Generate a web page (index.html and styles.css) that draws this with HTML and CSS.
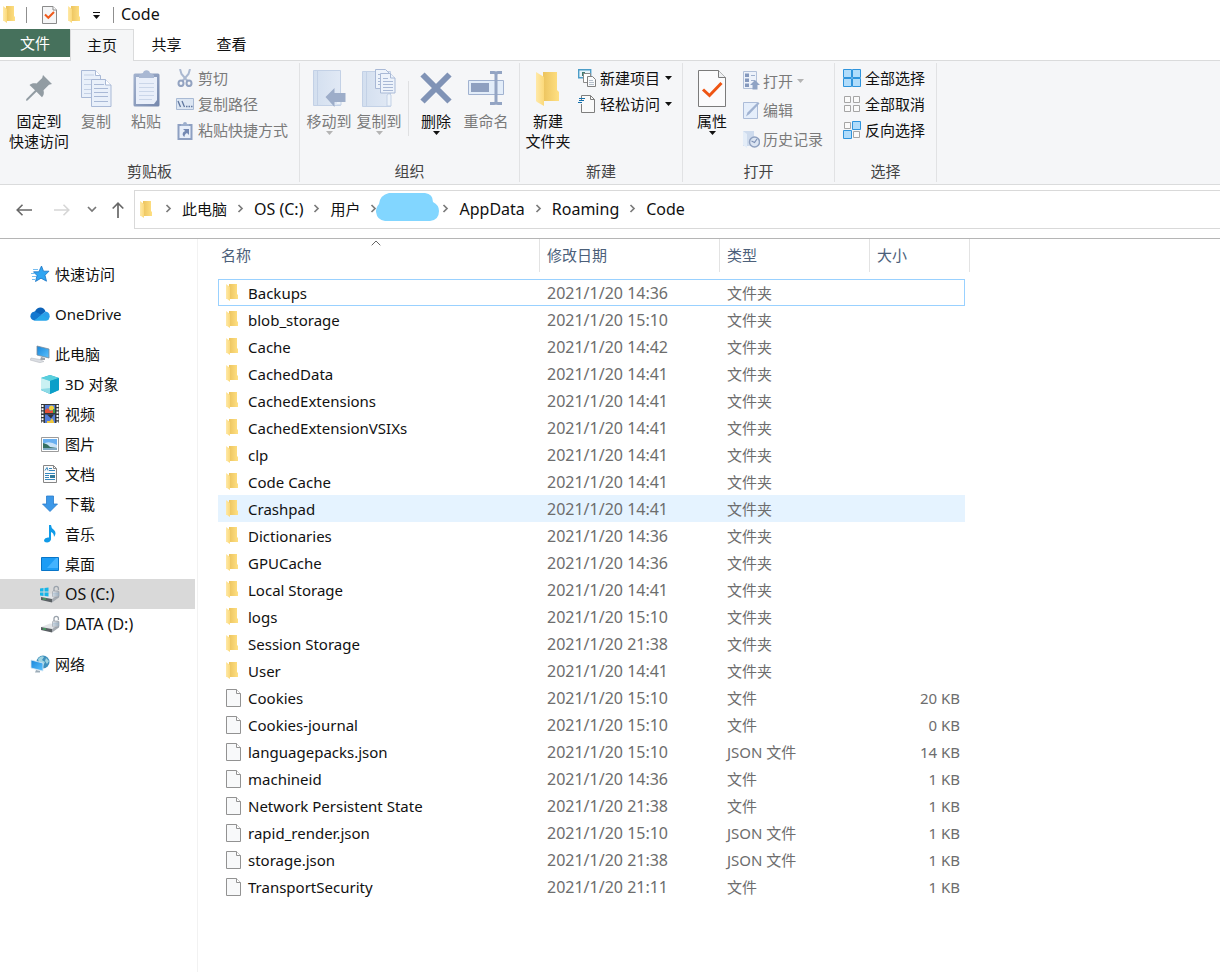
FILE: index.html
```html
<!DOCTYPE html>
<html lang="zh-CN">
<head>
<meta charset="utf-8">
<meta name="viewport" content="width=device-width, initial-scale=1">
<title>Code</title>
<link rel="stylesheet" href="styles.css">
</head>
<body>
<svg class="defs" width="0" height="0" aria-hidden="true">
  <defs>
    <linearGradient id="g-front" x1="0" x2="1"><stop offset="0" stop-color="#ffe9a8"/><stop offset="1" stop-color="#fbd97a"/></linearGradient>
    <linearGradient id="g-back" x1="0" x2="1"><stop offset="0" stop-color="#ecc45f"/><stop offset="1" stop-color="#ffe083"/></linearGradient>
    <linearGradient id="g-sky" x1="0" y1="0" x2="1" y2="1"><stop offset="0" stop-color="#1784d8"/><stop offset="1" stop-color="#5cc3ff"/></linearGradient>
    <linearGradient id="g-metal" x1="0" x2="1"><stop offset="0" stop-color="#f0f0f0"/><stop offset="1" stop-color="#a9adb3"/></linearGradient>
    <linearGradient id="g-slate" x1="0" y1="0" x2="1" y2="1"><stop offset="0" stop-color="#a3b3cf"/><stop offset="1" stop-color="#7688ad"/></linearGradient>
    <linearGradient id="g-book" x1="0" x2="1"><stop offset="0" stop-color="#d3dfef"/><stop offset="1" stop-color="#e1e9f5"/></linearGradient>
    <symbol id="folder" viewBox="0 0 12 17">
      <path d="M3 0h8v10l1 1v4H3z" fill="url(#g-back)"/>
      <path d="M0 0l4 3v14l-3-2H0z" fill="url(#g-front)"/>
    </symbol>
    <symbol id="file" viewBox="0 0 15 18">
      <path d="M.5.5h10l4 4v13H.5z" fill="#f8f9fa" stroke="#929292"/>
      <path d="M10.500.5v4h4" fill="#fff" stroke="#929292"/>
    </symbol>
    <symbol id="chev" viewBox="0 0 7 9"><path d="M1.500 1l3.500 3.500-3.500 3.500" fill="none" stroke="#7b7b7b" stroke-width="1.700"/></symbol>
    <symbol id="caret" viewBox="0 0 7 4"><path d="M0 0h7L3.500 4z" fill="currentColor"/></symbol>
    <symbol id="drive" viewBox="0 0 20 18">
      <path d="M1 12l9-3.500 9 1-7 4.500z" fill="#e3e5e8"/>
      <path d="M1 12l11 2v3.500L1 15z" fill="#5a6064"/>
      <path d="M12 14l7-4.500v3l-7 5z" fill="#a6abb1"/>
      <rect x="3" y="13.500" width="3" height="1" fill="#37c65a"/>
      <path d="M14 7V3.500a2.200 2.200 0 0 1 4.400 0V5" fill="none" stroke="#9aa2ab" stroke-width="1.300"/>
      <rect x="12.500" y="6" width="6.500" height="6" rx="1" fill="url(#g-metal)" stroke="#8c96a3" stroke-width=".6"/>
      <path d="M13 8.200h6M13 10h6" stroke="#8fb1cf" stroke-width=".7"/>
    </symbol>
  </defs>
</svg>

<header class="titlebar">
  <svg class="title-folder" width="12" height="17"><use href="#folder"/></svg>
  <span class="title-sep title-sep-first"></span>
  <button class="quick quick-check" aria-label="属性">
    <svg width="15" height="18" viewBox="0 0 15 18"><path d="M.5.5h10.500l3.500 3.500v13.500H.5z" fill="#f5f6f7" stroke="#8b8b8b"/><path d="M11 .5V4h3.500" fill="#fff" stroke="#8b8b8b"/><path d="M3 8.500l3.300 3.300L12 6" fill="none" stroke="#ef5a1c" stroke-width="2"/></svg>
  </button>
  <button class="quick quick-folder" aria-label="新建文件夹"><svg width="12" height="17"><use href="#folder"/></svg></button>
  <button class="quick quick-more" aria-label="自定义快速访问工具栏">
    <svg width="8" height="8" viewBox="0 0 8 8"><path d="M0 .5h7" stroke="#111"/><path d="M0 3h7L3.500 7z" fill="#111"/></svg>
  </button>
  <span class="title-sep"></span>
  <h1 class="title">Code</h1>
</header>

<nav class="tabs" aria-label="功能区">
  <button class="tab tab-file">文件</button>
  <button class="tab tab-active">主页</button>
  <button class="tab">共享</button>
  <button class="tab">查看</button>
</nav>

<section class="ribbon">
  <div class="group group-clipboard">
    <div class="group-body">
      <button class="big big-wide">
        <span class="big-icon"><svg width="26" height="26" viewBox="0 0 26 26"><path d="M17 0l9 9-3 .8-5.500 5.500c.8 3 .3 5.200-1.500 7l-5.500-5.500L1.500 25.500 0 25.800.3 24 9 15.300 3.500 10c2-1.800 4.300-2.200 7-1.500L16.200 3z" fill="#929ca3"/></svg></span>
        <span>固定到</span><span>快速访问</span>
      </button>
      <button class="big is-off">
        <span class="big-icon"><svg width="31" height="37" viewBox="0 0 31 37"><g fill="#e9f0fa" stroke="#a9b9d6"><path d="M.5.5h14l5 5v22H.5z"/><path d="M14.500.5v5h5" fill="#fff"/><path d="M3 5h10M3 9.500h14M3 14.500h8M3 19.500h8M3 23.500h8" stroke="#c3d0e5"/><path d="M10.500 9.500h14l5.500 5.500v21.500H10.500z"/><path d="M24.500 9.500V15H30" fill="#fff"/><path d="M13 14.500h10M13 18.500h14M13 22.500h14M13 26.500h14M13 31.500h14" stroke="#a9b9d6"/></g></svg></span>
        <span>复制</span>
      </button>
      <button class="big is-off">
        <span class="big-icon"><svg width="27" height="38" viewBox="0 0 27 38"><rect x=".5" y="4.500" width="26" height="33" rx="1.500" fill="url(#g-slate)"/><path d="M3 8h21v23l-3 4H3z" fill="#e9effa"/><path d="M6 14.500h15M6 18.500h15M6 22.500h15M6 26.500h15M6 30.500h13" stroke="#cad6e9"/><path d="M6 9V6l4-2a3.600 3.600 0 0 1 7 0l4 2v3z" fill="#a9b8d3"/></svg></span>
        <span>粘贴</span>
      </button>
      <div class="stack stack-clip">
        <button class="small is-off"><svg width="18" height="18" viewBox="0 0 18 18"><g fill="none" stroke="#93a3c1"><path d="M4 0l1.500 5 6 7M14 0l-1.500 5-6 7" stroke="#abb9d1" stroke-width="2"/><ellipse cx="5" cy="14.300" rx="2.500" ry="2.800" stroke-width="2"/><ellipse cx="13" cy="14.300" rx="2.500" ry="2.800" stroke-width="2"/></g></svg>剪切</button>
        <button class="small is-off"><svg width="18" height="12" viewBox="0 0 18 12"><path d="M.5.5h17v11H.5z" fill="#dce6f3" stroke="#a9bad4"/><path d="M2 3l2.500 6M6 3l2.500 6M10 8.500h1.500M12.500 8.500H14M15 8.500h1.500" stroke="#5f769f" stroke-width="1.300"/></svg>复制路径</button>
        <button class="small is-off"><svg width="18" height="19" viewBox="0 0 18 19"><path d="M2.500 4h13v14h-13z" fill="#e8effa" stroke="#8ea0c2" stroke-width="2"/><path d="M5 5V3h2a2 2 0 0 1 4 0h2v2z" fill="#9dafcd"/><path d="M7 8h6v6l-2-2c-2 1-2.500 2-2.500 4-3-2-2-5 .7-6z" fill="#7489b3"/></svg>粘贴快捷方式</button>
      </div>
    </div>
    <h2 class="group-name">剪贴板</h2>
  </div>

  <div class="group group-organize">
    <div class="group-body">
      <button class="big is-off">
        <span class="big-icon"><svg width="33" height="38" viewBox="0 0 33 38"><path d="M.5 1.500h27v35H.5z" fill="url(#g-book)" stroke="#c3d1e6"/><path d="M4.500 1v35M24 25h4v11h-4" stroke="#c3d1e6" fill="#edf3fa"/><path d="M12.500 28l9-9v5h11v9h-11v5z" fill="#9dadc9"/></svg></span>
        <span>移动到</span><svg class="caret" width="7" height="4"><use href="#caret"/></svg>
      </button>
      <button class="big is-off">
        <span class="big-icon"><svg width="34" height="39" viewBox="0 0 34 39"><path d="M.5 2.500h28v35H.5z" fill="url(#g-book)" stroke="#c3d1e6"/><path d="M4.500 2v35M25 37V26q2-3 4 0v11z" fill="#edf3fa" stroke="#c3d1e6"/><g fill="#edf3fb" stroke="#a9b9d6"><path d="M13.500.5h10l4 4v15h-14z"/><path d="M16 5.500h7M16 9.500h3M16 12.500h3M16 15.500h3"/><path d="M18.500 4.500h10l4.500 4.500v15H18.500z"/><path d="M28.500 4.500V9H33"/><path d="M21 9.500h5M21 12.500h10M21 15.500h10M21 18.500h10M21 21.500h10"/></g></svg></span>
        <span>复制到</span><svg class="caret" width="7" height="4"><use href="#caret"/></svg>
      </button>
      <span class="inner-sep"></span>
      <button class="big">
        <span class="big-icon"><svg width="32" height="32" viewBox="0 0 32 32"><path d="M2.500 2.500l27 27M29.500 2.500l-27 27" stroke="#8093b6" stroke-width="6"/></svg></span>
        <span>删除</span><svg class="caret" width="7" height="4"><use href="#caret"/></svg>
      </button>
      <button class="big is-off">
        <span class="big-icon"><svg width="36" height="34" viewBox="0 0 36 34"><path d="M.5 9.500h35v14H.5z" fill="#e3edf9" stroke="#a1b2d0"/><path d="M3 12h18v9H3z" fill="#8fa0c0"/><path d="M22 1.500h4q2 0 2 2 0-2 2-2h4M28 3v28M22 32.500h4q2 0 2-2 0 2 2 2h4" fill="none" stroke="#93a4c3" stroke-width="3"/></svg></span>
        <span>重命名</span>
      </button>
    </div>
    <h2 class="group-name">组织</h2>
  </div>

  <div class="group group-new">
    <div class="group-body">
      <button class="big">
        <span class="big-icon"><svg width="25" height="35" viewBox="0 0 25 35"><path d="M7 1h14v18l2 2v9H7z" fill="url(#g-back)"/><path d="M0 1l8 5v29l-7-4-1-1z" fill="url(#g-front)"/></svg></span>
        <span>新建</span><span>文件夹</span>
      </button>
      <div class="stack stack-new">
        <button class="small"><svg width="18" height="18" viewBox="0 0 18 18"><path d="M.7.7h12v8H.7z" fill="#e8f4fb" stroke="#4c9dc8" stroke-width="1.400"/><path d="M4 3h3v4H4z" fill="#407c70"/><path d="M5.500 4.500h7v9h-7z" fill="#fff" stroke="#8b8b8b"/><path d="M9.500 7.500h5l3 3v7h-8z" fill="#f9fafb" stroke="#808080"/><path d="M11 11.500h4M11 13.500h5M11 15.500h5" stroke="#b4becb"/></svg>新建项目<svg class="drop" width="7" height="4"><use href="#caret"/></svg></button>
        <button class="small"><svg width="18" height="18" viewBox="0 0 18 18"><path d="M3.500 5V.5h9l4 4v13h-13V9" fill="#fafafa" stroke="#7e7e7e"/><path d="M12.500.5v4h4" fill="none" stroke="#7e7e7e"/><path d="M1 3.500h6M1 5.500h5M0 7.500h4" stroke="#1670ab"/></svg>轻松访问<svg class="drop" width="7" height="4"><use href="#caret"/></svg></button>
      </div>
    </div>
    <h2 class="group-name">新建</h2>
  </div>

  <div class="group group-open">
    <div class="group-body">
      <button class="big">
        <span class="big-icon"><svg width="28" height="37" viewBox="0 0 28 37"><path d="M.5.5h20l7 7v29H.5z" fill="#fbfbfc" stroke="#7b7b7b"/><path d="M20.500.5v7h7" fill="#eef0f2" stroke="#7b7b7b"/><path d="M5 19.500l6.500 6L23.500 13" fill="none" stroke="#ee5514" stroke-width="3"/></svg></span>
        <span>属性</span><svg class="caret" width="7" height="4"><use href="#caret"/></svg>
      </button>
      <div class="stack stack-open">
        <button class="small is-off"><svg width="17" height="19" viewBox="0 0 17 19"><path d="M.5.5h13v17H.5z" fill="#edf2fa" stroke="#b2c1d9"/><path d="M2 2.500h4v3.500H2zM2 7.500h4v3.500H2zM2 12.500h4V16H2z" fill="#8498bd"/><path d="M8 4.500h4M8 9.500h4" stroke="#9eb0cd"/><path d="M12 9l5 5h-2.500v4.500h-5V14H7z" fill="#8fa3c4"/></svg>打开<svg class="drop" width="7" height="4"><use href="#caret"/></svg></button>
        <button class="small is-off"><svg width="17" height="18" viewBox="0 0 17 18"><path d="M.5 1.500h14v16H.5z" fill="#e5eefb" stroke="#acbcd8"/><path d="M3 15.500l1.500-4L15 1l1.500 1.500L6.500 13z" fill="#a0b2d1"/></svg>编辑</button>
        <button class="small is-off"><svg width="17" height="18" viewBox="0 0 17 18"><path d="M0 1h11v15H0z" fill="#cedbed"/><path d="M0 1l4 3v14l-4-3z" fill="#e4edf8"/><circle cx="11.500" cy="12" r="5" fill="#dce5f2" stroke="#8fa1c0" stroke-width="1.500"/><path d="M8.500 11l3 1.500L14 9" fill="none" stroke="#7e91b5" stroke-width="1.200"/></svg>历史记录</button>
      </div>
    </div>
    <h2 class="group-name">打开</h2>
  </div>

  <div class="group group-select">
    <div class="group-body">
      <div class="stack stack-select">
        <button class="small"><svg width="18" height="18" viewBox="0 0 18 18"><path d="M.5.5h8v8h-8zM9.500.5h8v8h-8zM.5 9.500h8v8h-8zM9.500 9.500h8v8h-8z" fill="#b0dcfb" stroke="#2f94dc"/></svg>全部选择</button>
        <button class="small"><svg width="18" height="18" viewBox="0 0 18 18"><path d="M1.500 1.500h6v6h-6zM10.500 1.500h6v6h-6zM1.500 10.500h6v6h-6zM10.500 10.500h6v6h-6z" fill="#fafafa" stroke="#a5a5a5"/></svg>全部取消</button>
        <button class="small"><svg width="18" height="18" viewBox="0 0 18 18"><path d="M1.500 1.500h6v6h-6zM10.500 10.500h6v6h-6z" fill="#fafafa" stroke="#a5a5a5"/><path d="M9.500.5h8v8h-8zM.5 9.500h8v8h-8z" fill="#b0dcfb" stroke="#2f94dc"/></svg>反向选择</button>
      </div>
    </div>
    <h2 class="group-name">选择</h2>
  </div>
</section>

<div class="addressbar">
  <button class="nav nav-back" aria-label="后退"><svg width="16" height="12" viewBox="0 0 16 12"><path d="M6.500.7L1.200 6l5.300 5.300M1.200 6H16" fill="none" stroke="#686868" stroke-width="1.600"/></svg></button>
  <button class="nav nav-forward" aria-label="前进"><svg width="16" height="12" viewBox="0 0 16 12"><path d="M9.500.7L14.800 6l-5.300 5.300M14.800 6H0" fill="none" stroke="#d6d6d6" stroke-width="1.600"/></svg></button>
  <button class="nav nav-recent" aria-label="最近浏览的位置"><svg width="10" height="7" viewBox="0 0 10 7"><path d="M1 1l4 4 4-4" fill="none" stroke="#777" stroke-width="1.700"/></svg></button>
  <button class="nav nav-up" aria-label="向上"><svg width="12" height="16" viewBox="0 0 12 16"><path d="M.7 6.500L6 1.200l5.300 5.300M6 1.200V16" fill="none" stroke="#686868" stroke-width="1.700"/></svg></button>
  <nav class="path" aria-label="地址">
    <svg class="path-folder" width="12" height="17"><use href="#folder"/></svg>
    <svg class="chev" width="7" height="9"><use href="#chev"/></svg>
    <a class="crumb" href="#">此电脑</a>
    <svg class="chev" width="7" height="9"><use href="#chev"/></svg>
    <a class="crumb latin" href="#">OS (C:)</a>
    <svg class="chev" width="7" height="9"><use href="#chev"/></svg>
    <a class="crumb" href="#">用户</a>
    <svg class="chev chev-tight" width="7" height="9"><use href="#chev"/></svg>
    <svg class="mask" width="63" height="28" viewBox="0 0 63 28"><path d="M13 0h36q8 1 8 9 6 3 6 9 0 9-9 10H9q-8-1-9-9 0-5 3-8 1-9 10-11z" fill="#82d6ff"/></svg>
    <svg class="chev chev-after" width="7" height="9"><use href="#chev"/></svg>
    <a class="crumb latin" href="#">AppData</a>
    <svg class="chev" width="7" height="9"><use href="#chev"/></svg>
    <a class="crumb latin" href="#">Roaming</a>
    <svg class="chev" width="7" height="9"><use href="#chev"/></svg>
    <a class="crumb latin" href="#">Code</a>
  </nav>
</div>

<div class="content">
  <nav class="sidebar" aria-label="导航窗格">
    <div class="places">
      <a class="place" href="#"><svg width="20" height="18" viewBox="0 0 20 18"><path d="M11.500 1l2 5.200h5.500l-4 4 1.500 6-5.500-3-5.500 3.300L7 10.500 3.500 6.800h5.300z" fill="#30a5f2" stroke="#1b74c4" stroke-width=".8"/><path d="M3 4.500h5M1 8.500h4M2 11.500h4M2 14.500h3" stroke="#76bdf0"/></svg>快速访问</a>
    </div>
    <div class="places">
      <a class="place" href="#"><svg width="20" height="14" viewBox="0 0 20 14"><path d="M5 4.500C7-.8 14-.8 15.500 4.500L10 9 2 6z" fill="#0b62b8"/><path d="M4.500 13.500C-1 13-1 5 5 4.500l7 3.500-7 5.500z" fill="#1378d0"/><path d="M11 8l4.500-3.500C21 5 21 13 16 13.500H5z" fill="#2ba0ea"/><path d="M4 13.500L12 8l7 4q-1 1.500-3 1.500z" fill="#28a8ea"/></svg>OneDrive</a>
    </div>
    <div class="places">
      <a class="place" href="#"><svg width="20" height="18" viewBox="0 0 20 18"><path d="M7 1l12 3v9L7 10z" fill="url(#g-sky)" stroke="#7b8b9b" stroke-width=".8"/><path d="M11 12l4 1v2h-5z" fill="#9ba3ab"/><path d="M1 13l9 1.500 4 2-4 1.200L0 15z" fill="#dadde2" stroke="#b1b5bb" stroke-width=".5"/></svg>此电脑</a>
      <a class="place child" href="#"><svg width="20" height="19" viewBox="0 0 20 19"><path d="M10 0l9 3v12l-9 4-9-4V3z" fill="#1ea6c9"/><path d="M10 0l9 3-9 3-9-3z" fill="#59cfdd"/><path d="M1 3l9 3v9l-9-1z" fill="#c9f1f3"/><path d="M10 6l9-3v12l-9 4z" fill="#0c9fc9"/><path d="M1 14l9-1v6l-9-4z" fill="#8ddbe6"/></svg>3D 对象</a>
      <a class="place child" href="#"><svg width="20" height="20" viewBox="0 0 20 20"><path d="M1 0h18v19H1z" fill="#33373c"/><path d="M5 1h10v8H5zM5 10.500h10V19H5z" fill="#547cd8"/><path d="M2.500 1v18M17.500 1v18" stroke="#fff" stroke-width="2" stroke-dasharray="2 1.300"/><circle cx="11.500" cy="4" r="2.500" fill="#f1cf3d"/><path d="M5 6l3-2 2 3 4-1v3H5z" fill="#e65138"/><path d="M7 10.500h7l-3 4z" fill="#333"/><path d="M7 17h3l2-3 2 4v1H7z" fill="#efc63c"/><path d="M13 5h2v4h-2z" fill="#3d9b4d"/></svg>视频</a>
      <a class="place child" href="#"><svg width="20" height="15" viewBox="0 0 20 15"><path d="M1.500.5h17v14h-17z" fill="#fff" stroke="#9b9b9b"/><path d="M3 2h14v11H3z" fill="#68aff0"/><path d="M3 7q6-4 14 1v3H3z" fill="#c7e1f8"/><path d="M3 6q5 1 7 4l7 1H3z" fill="#356f62"/><path d="M3 11h14v2H3z" fill="#7fa9c4"/></svg>图片</a>
      <a class="place child" href="#"><svg width="20" height="18" viewBox="0 0 20 18"><path d="M3.500.5h10l3 3v14h-13z" fill="#fbfbfb" stroke="#868686"/><path d="M13.500.5v3h3" fill="none" stroke="#868686"/><path d="M5 5.500l2-3 1 3M9 3.500h3M9 5.500h6M5 8.500h10M5 10.500h4M5 12.500h4M5 14.500h10" stroke="#3688bd" fill="none"/><path d="M10 10h5v3h-5z" fill="#317a9b"/></svg>文档</a>
      <a class="place child" href="#"><svg width="20" height="18" viewBox="0 0 20 18"><path d="M6.500 1h7v8h4L10 16.500 2.500 9h4z" fill="#3c98e8" stroke="#287bcb" stroke-width=".8"/></svg>下载</a>
      <a class="place child" href="#"><svg width="20" height="18" viewBox="0 0 20 18"><path d="M9 0h2q0 3 3 5 3 3 0 7 0-4-3-5v7.500q-1 3-4 3t-3-2.500q1-3 5-2.500z" fill="#109be8"/></svg>音乐</a>
      <a class="place child" href="#"><svg width="20" height="14" viewBox="0 0 20 14"><path d="M1.500.5h17v13h-17z" fill="#1c9cf5" stroke="#0875c8"/><path d="M7 11L16 1h2v10z" fill="#43b3ff"/></svg>桌面</a>
      <a class="place child latin is-current" href="#" aria-current="page"><svg width="20" height="18" viewBox="0 0 20 18"><use href="#drive" width="20" height="18"/><path d="M0 3.500L3.500 3v3.500H0zM4.500 3l4-.5v4h-4zM0 7.500h3.500V11L0 10.500zM4.500 7.500h4v4l-4-.5z" fill="#16b5e8"/></svg>OS (C:)</a>
      <a class="place child latin" href="#"><svg width="20" height="18"><use href="#drive"/></svg>DATA (D:)</a>
    </div>
    <div class="places">
      <a class="place" href="#"><svg width="20" height="18" viewBox="0 0 20 18"><circle cx="13" cy="7" r="6.500" fill="#3f90bd"/><path d="M8 4q3-4 6-2l-2 3 3 2-2 4-4-3zM16 3l3 3-2 3-2-3z" fill="#9fd3e0"/><path d="M1 5l12 3v8L1 13z" fill="url(#g-sky)" stroke="#d8e9f5" stroke-width=".8"/><path d="M6 15l4 1v1.500H5z" fill="#9dadb9"/></svg>网络</a>
    </div>
  </nav>

  <main class="files">
    <table class="list">
      <colgroup><col class="c-name"><col class="c-date"><col class="c-type"><col class="c-size"><col class="c-end"></colgroup>
      <thead>
        <tr><th scope="col" class="h-name" aria-sort="ascending">名称<svg class="sort" width="10" height="6" viewBox="0 0 10 6"><path d="M.7 5.300L5 1l4.300 4.300" fill="none" stroke="#666"/></svg></th><th scope="col">修改日期</th><th scope="col">类型</th><th scope="col" colspan="2">大小</th></tr>
      </thead>
      <tbody>
        <tr class="gap"><td colspan="5"></td></tr>
        <tr class="is-focused"><td class="name"><svg width="15" height="18"><use href="#folder" width="12" height="17"/></svg>Backups</td><td class="latin">2021/1/20 14:36</td><td>文件夹</td><td></td></tr>
        <tr><td class="name"><svg width="15" height="18"><use href="#folder" width="12" height="17"/></svg>blob_storage</td><td class="latin">2021/1/20 15:10</td><td>文件夹</td><td></td></tr>
        <tr><td class="name"><svg width="15" height="18"><use href="#folder" width="12" height="17"/></svg>Cache</td><td class="latin">2021/1/20 14:42</td><td>文件夹</td><td></td></tr>
        <tr><td class="name"><svg width="15" height="18"><use href="#folder" width="12" height="17"/></svg>CachedData</td><td class="latin">2021/1/20 14:41</td><td>文件夹</td><td></td></tr>
        <tr><td class="name"><svg width="15" height="18"><use href="#folder" width="12" height="17"/></svg>CachedExtensions</td><td class="latin">2021/1/20 14:41</td><td>文件夹</td><td></td></tr>
        <tr><td class="name"><svg width="15" height="18"><use href="#folder" width="12" height="17"/></svg>CachedExtensionVSIXs</td><td class="latin">2021/1/20 14:41</td><td>文件夹</td><td></td></tr>
        <tr><td class="name"><svg width="15" height="18"><use href="#folder" width="12" height="17"/></svg>clp</td><td class="latin">2021/1/20 14:41</td><td>文件夹</td><td></td></tr>
        <tr><td class="name"><svg width="15" height="18"><use href="#folder" width="12" height="17"/></svg>Code Cache</td><td class="latin">2021/1/20 14:41</td><td>文件夹</td><td></td></tr>
        <tr class="is-hover"><td class="name"><svg width="15" height="18"><use href="#folder" width="12" height="17"/></svg>Crashpad</td><td class="latin">2021/1/20 14:41</td><td>文件夹</td><td></td></tr>
        <tr><td class="name"><svg width="15" height="18"><use href="#folder" width="12" height="17"/></svg>Dictionaries</td><td class="latin">2021/1/20 14:36</td><td>文件夹</td><td></td></tr>
        <tr><td class="name"><svg width="15" height="18"><use href="#folder" width="12" height="17"/></svg>GPUCache</td><td class="latin">2021/1/20 14:36</td><td>文件夹</td><td></td></tr>
        <tr><td class="name"><svg width="15" height="18"><use href="#folder" width="12" height="17"/></svg>Local Storage</td><td class="latin">2021/1/20 14:41</td><td>文件夹</td><td></td></tr>
        <tr><td class="name"><svg width="15" height="18"><use href="#folder" width="12" height="17"/></svg>logs</td><td class="latin">2021/1/20 15:10</td><td>文件夹</td><td></td></tr>
        <tr><td class="name"><svg width="15" height="18"><use href="#folder" width="12" height="17"/></svg>Session Storage</td><td class="latin">2021/1/20 21:38</td><td>文件夹</td><td></td></tr>
        <tr><td class="name"><svg width="15" height="18"><use href="#folder" width="12" height="17"/></svg>User</td><td class="latin">2021/1/20 14:41</td><td>文件夹</td><td></td></tr>
        <tr><td class="name"><svg width="15" height="18"><use href="#file"/></svg>Cookies</td><td class="latin">2021/1/20 15:10</td><td>文件</td><td class="size">20 KB</td></tr>
        <tr><td class="name"><svg width="15" height="18"><use href="#file"/></svg>Cookies-journal</td><td class="latin">2021/1/20 15:10</td><td>文件</td><td class="size">0 KB</td></tr>
        <tr><td class="name"><svg width="15" height="18"><use href="#file"/></svg>languagepacks.json</td><td class="latin">2021/1/20 15:10</td><td>JSON 文件</td><td class="size">14 KB</td></tr>
        <tr><td class="name"><svg width="15" height="18"><use href="#file"/></svg>machineid</td><td class="latin">2021/1/20 14:36</td><td>文件</td><td class="size">1 KB</td></tr>
        <tr><td class="name"><svg width="15" height="18"><use href="#file"/></svg>Network Persistent State</td><td class="latin">2021/1/20 21:38</td><td>文件</td><td class="size">1 KB</td></tr>
        <tr><td class="name"><svg width="15" height="18"><use href="#file"/></svg>rapid_render.json</td><td class="latin">2021/1/20 15:10</td><td>JSON 文件</td><td class="size">1 KB</td></tr>
        <tr><td class="name"><svg width="15" height="18"><use href="#file"/></svg>storage.json</td><td class="latin">2021/1/20 21:38</td><td>JSON 文件</td><td class="size">1 KB</td></tr>
        <tr><td class="name"><svg width="15" height="18"><use href="#file"/></svg>TransportSecurity</td><td class="latin">2021/1/20 21:11</td><td>文件</td><td class="size">1 KB</td></tr>
      </tbody>
    </table>
  </main>
</div>
</body>
</html>
```

FILE: styles.css
```css
* { box-sizing: border-box; }

body {
  margin: 0;
  min-height: 100vh;
  display: flex;
  flex-direction: column;
  background: #fff;
  color: #111;
  font: 15px/20px "Noto Sans", "Noto Sans CJK SC", sans-serif;
}

button {
  margin: 0;
  padding: 0;
  border: 0;
  background: none;
  color: inherit;
  font: inherit;
  white-space: nowrap;
}

a { color: inherit; text-decoration: none; }
svg { display: block; flex: none; }
.defs { position: absolute; }
.latin { font-size: 16px; }

/* Title bar */
.titlebar { display: flex; align-items: center; height: 29px; padding-left: 3px; }
.title-sep { width: 1px; height: 16px; background: #8f8f8f; }
.title-sep-first { margin-left: 11px; }
.quick-check { margin-left: 15px; }
.quick-folder { margin-left: 11px; }
.quick-more { margin: 3px 12px 0 13px; }
.title { margin: 0 0 0 7px; padding-bottom: 2px; font-size: 16px; font-weight: 400; }

/* Ribbon tabs */
.tabs { display: flex; height: 32px; border-bottom: 1px solid #dadbdc; }
.tab { width: 65px; height: 31px; padding-bottom: 2px; }
.tab-file { width: 70px; height: 28px; padding: 0; background: #46715c; color: #fff; }
.tab-active {
  width: 64px;
  height: 32px;
  border: 1px solid #dadbdc;
  border-bottom: 0;
  background: #f5f6f7;
}

/* Ribbon */
.ribbon {
  display: flex;
  height: 124px;
  background: #f5f6f8;
  border-bottom: 1px solid #dadbdc;
}
.group {
  display: flex;
  flex-direction: column;
  justify-content: space-between;
  flex: none;
  margin: 2px 0;
  padding: 2px 0 1px;
  border-right: 1px solid #e1e2e4;
}
.group-clipboard { width: 300px; }
.group-organize { width: 220px; }
.group-new { width: 163px; }
.group-open { width: 152px; }
.group-select { width: 102px; }
.group-body { display: flex; padding-left: 4px; }
.group-clipboard .group-body { padding-left: 9px; }
.group-new .group-body { padding-left: 3px; }
.group-name {
  margin: 0;
  font-size: 15px;
  font-weight: 400;
  text-align: center;
  color: #444;
}
.big {
  display: flex;
  flex-direction: column;
  align-items: center;
  width: 50px;
}
.big-wide { width: 60px; margin-right: 2px; }
.big-icon { display: flex; align-items: center; height: 46px; }
.is-off { color: #7a7a7a; }
.is-off .caret, .is-off .drop { color: #b4b4b4; }
.inner-sep { width: 1px; height: 55px; margin: 16px 2px 0 4px; background: #dfe0e2; }
.stack { display: flex; flex-direction: column; align-items: flex-start; }
.stack-clip { margin-left: 5px; }
.stack-new { margin-left: 5px; }
.stack-open { margin: 1px 0 0 6px; }
.stack-select { margin-left: 4px; }
.small { display: flex; align-items: center; gap: 4px; height: 26px; }
.stack-open .small { height: 29px; gap: 3px; }
.drop { margin-left: 1px; }

/* Address bar */
.addressbar {
  display: flex;
  align-items: center;
  height: 54px;
  padding: 0 0 4px 16px;
  border-bottom: 1px solid #b5b5b5;
}
.nav-forward { margin-left: 22px; }
.nav-recent { margin-left: 17px; }
.nav-up { margin-left: 15px; }
.path {
  display: flex;
  align-items: center;
  flex: 1;
  height: 39px;
  margin-left: 10px;
  padding-left: 5px;
  border: 1px solid #d9d9d9;
  border-right: 0;
}
.crumb { padding-bottom: 2px; }
.chev { margin: 0 10px 2px; }
.path-folder { margin-right: 3px; }
.chev-tight { margin-right: 0; }
.chev-after { margin-left: 3px; }
.mask { margin: 0 0 5px -1px; }

/* Content */
.content { display: flex; flex: 1; }
.sidebar {
  display: flex;
  flex-direction: column;
  gap: 10px;
  width: 198px;
  flex: none;
  padding: 20px 2px 0 0;
  border-right: 1px solid #f2f2f2;
}
.place {
  display: flex;
  align-items: center;
  gap: 5px;
  height: 30px;
  padding-left: 30px;
}
.child { padding-left: 40px; }
.is-current { background: #d9d9d9; }

/* File list */
.files { flex: 1; padding-left: 20px; }
.list { border-collapse: separate; border-spacing: 0; table-layout: fixed; width: 752px; }
.c-name { width: 322px; }
.c-date { width: 180px; }
.c-type { width: 150px; }
.c-size { width: 95px; }
.c-end { width: 5px; }
th {
  height: 33px;
  padding: 0 0 2px 7px;
  border-right: 1px solid #e3e3e3;
  color: #4c607a;
  font-weight: 400;
  text-align: left;
}
.h-name { position: relative; padding-left: 3px; }
.sort { position: absolute; top: 1px; left: 153px; }
td {
  height: 27px;
  padding: 1px 0 0 7px;
  color: #6d6d6d;
}
.gap td { height: 7px; padding: 0; }
.name { display: flex; align-items: center; gap: 7px; padding-left: 8px; color: #111; }
.size { padding-right: 5px; text-align: right; }
.is-focused td { border: solid #99d1ff; border-width: 1px 0; padding-top: 0; }
.is-focused td:first-child { border-left-width: 1px; padding-left: 7px; }
.is-focused td:last-child { border-right-width: 1px; }
.is-hover td { background: #e5f3ff; }
```
